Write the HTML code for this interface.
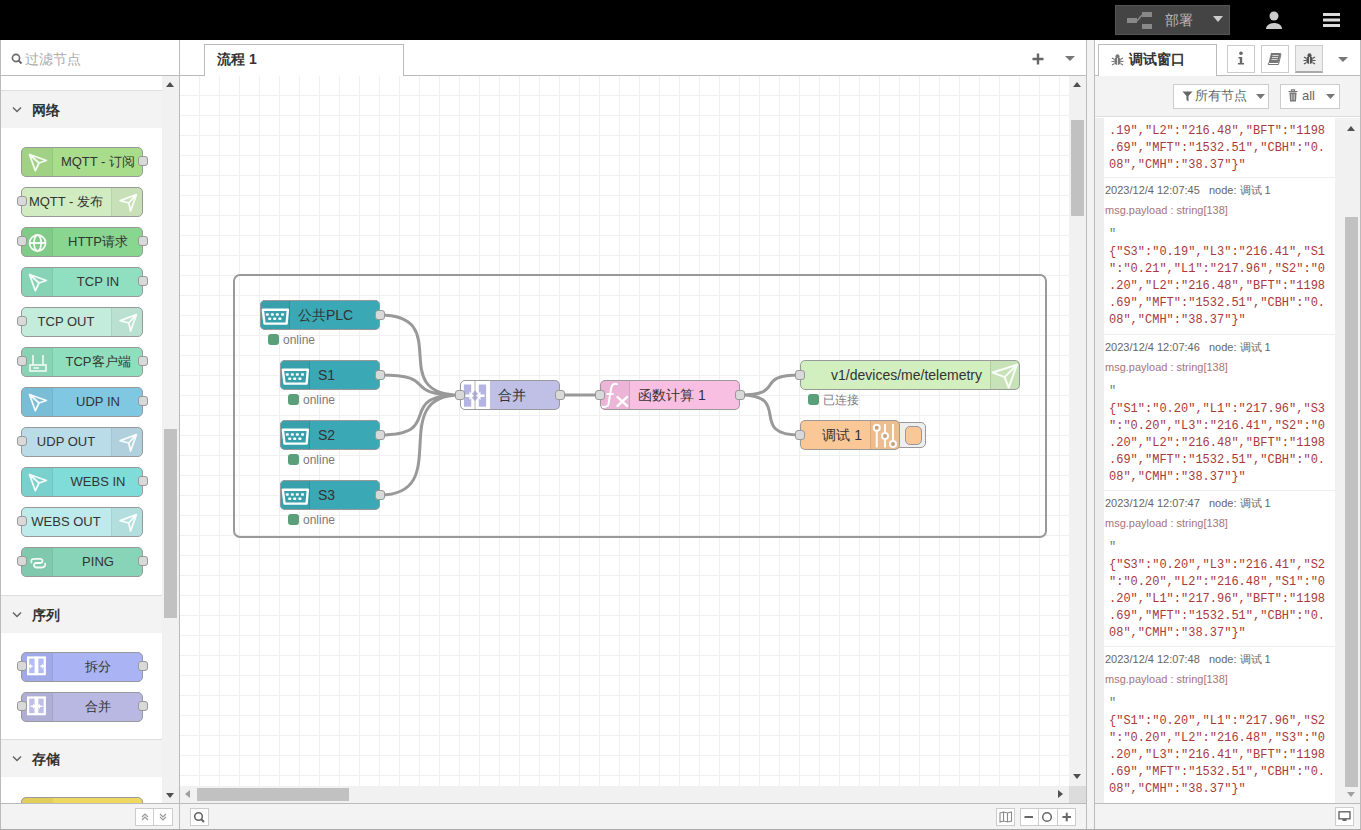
<!DOCTYPE html><html><head><meta charset="utf-8"><style>

*{margin:0;padding:0;box-sizing:border-box}
html,body{width:1361px;height:830px;overflow:hidden;background:#fff;font-family:"Liberation Sans", sans-serif;color:#333}
div{position:absolute}
.pn{width:122px;height:30px;border:1px solid #999;border-radius:5px;overflow:hidden}
.pl{top:4px;height:20px;line-height:20px;font-size:13px;text-align:center;white-space:nowrap;color:#333}
.pp{width:10px;height:10px;border:1px solid #999;border-radius:3px;background:#d9d9d9}
.cat{left:1px;width:161px;height:38px;background:#f3f3f3;border-top:1px solid #ddd}
.cat span{position:absolute;left:31px;top:0;line-height:38px;font-size:14px;font-weight:bold;color:#333}
.chev{position:absolute;left:11px;top:15px;}
.btn{border:1px solid #ccc;background:#fff;border-radius:0}
.dd{font-size:11px;color:#666;white-space:nowrap}
.mn{font-size:11px;color:#a87474;white-space:nowrap}
.js{font-family:"Liberation Mono", monospace;font-size:12px;color:#a83a3a;white-space:pre;line-height:17px}

</style></head><body>
<div style="left:0;top:0;width:1361px;height:40px;background:#000"></div>
<div style="left:1115px;top:5px;width:115px;height:30px;background:#444;border:1px solid #555"></div>
<svg style="position:absolute;left:1125px;top:10px" width="30" height="22"><g fill="#888"><rect x="2" y="8" width="10" height="5"/><rect x="17" y="2" width="10" height="5"/><rect x="17" y="14" width="10" height="5"/><path d="M12 11 L17 5" stroke="#888" stroke-width="1.5"/></g></svg>
<div style="left:1165px;top:10px;font-size:14px;color:#bbb;line-height:20px">部署</div>
<svg style="position:absolute;left:1213px;top:16px" width="10" height="6"><path d="M0 0 L10 0 L5 6 Z" fill="#ccc"/></svg>
<svg style="position:absolute;left:1264px;top:10px" width="20" height="20"><circle cx="10" cy="6" r="4.5" fill="#ccc"/><path d="M2 19 C2 11 18 11 18 19 Z" fill="#ccc"/></svg>
<svg style="position:absolute;left:1322px;top:12px" width="20" height="16"><g fill="#ddd"><rect x="1" y="1" width="17" height="3"/><rect x="1" y="6.5" width="17" height="3"/><rect x="1" y="12" width="17" height="3"/></g></svg>
<div style="left:0;top:40px;width:1px;height:790px;background:#bbb"></div>
<div style="left:179px;top:40px;width:1px;height:790px;background:#bbb"></div>
<div style="left:1px;top:75px;width:178px;height:1px;background:#bbb"></div>
<svg style="position:absolute;left:11px;top:53px" width="12" height="12"><circle cx="5" cy="5" r="3.6" fill="none" stroke="#666" stroke-width="1.6"/><line x1="7.6" y1="7.6" x2="10.5" y2="10.5" stroke="#666" stroke-width="2"/></svg>
<div style="left:25px;top:49px;font-size:14px;color:#aaa;line-height:20px">过滤节点</div>
<div style="left:162px;top:76px;width:17px;height:727px;background:#f1f1f1"></div>
<div style="left:164px;top:429px;width:13px;height:189px;background:#c1c1c1"></div>
<svg style="position:absolute;left:166px;top:82px" width="9" height="6"><path d="M0 5 L8 5 L4 0 Z" fill="#505050"/></svg>
<svg style="position:absolute;left:166px;top:793px" width="9" height="6"><path d="M0 0 L8 0 L4 5 Z" fill="#505050"/></svg>
<div class="cat" style="top:90px"><svg class="chev" width="10" height="8"><path d="M1 1.5 L5 5.5 L9 1.5" fill="none" stroke="#666" stroke-width="1.5"/></svg><span>网络</span></div>
<div class="cat" style="top:595px"><svg class="chev" width="10" height="8"><path d="M1 1.5 L5 5.5 L9 1.5" fill="none" stroke="#666" stroke-width="1.5"/></svg><span>序列</span></div>
<div class="cat" style="top:739px"><svg class="chev" width="10" height="8"><path d="M1 1.5 L5 5.5 L9 1.5" fill="none" stroke="#666" stroke-width="1.5"/></svg><span>存储</span></div>
<div class="pn" style="left:21px;top:147px;background:#a9dd8c"><div style="position:absolute;top:0;left:0;width:31px;height:28px;background:rgba(0,0,0,0.05);border-right:1px solid rgba(0,0,0,0.05)"></div><svg width="30" height="28" style="position:absolute;top:0;left:0"><path d="M7.5 6.5 L24.4 12.5 L17 15 L13.3 22.7 Z M7.5 6.5 L17 15" fill="none" stroke="#fff" stroke-opacity="0.9" stroke-width="1.8" stroke-linejoin="round"/></svg><div class="pl" style="left:32px;right:0">MQTT - 订阅</div></div><div class="pp" style="left:138px;top:156px"></div>
<div class="pn" style="left:21px;top:187px;background:#d2ecc2"><div style="position:absolute;top:0;right:0;width:31px;height:28px;background:rgba(0,0,0,0.05);border-left:1px solid rgba(0,0,0,0.05)"></div><svg width="30" height="28" style="position:absolute;top:0;right:0"><path d="M24.4 6.7 L8.2 12.6 L16.7 15 L18.6 23 Z M24.4 6.7 L16.7 15" fill="none" stroke="#fff" stroke-opacity="0.9" stroke-width="1.8" stroke-linejoin="round"/></svg><div class="pl" style="left:0;right:32px">MQTT - 发布</div></div><div class="pp" style="left:17px;top:196px"></div>
<div class="pn" style="left:21px;top:227px;background:#88d690"><div style="position:absolute;top:0;left:0;width:31px;height:28px;background:rgba(0,0,0,0.05);border-right:1px solid rgba(0,0,0,0.05)"></div><svg width="30" height="28" style="position:absolute;top:0;left:0"><g fill="none" stroke="#fff" stroke-opacity="0.9" stroke-width="1.8"><circle cx="15.6" cy="15" r="8"/><ellipse cx="15.6" cy="15" rx="3.6" ry="8"/><line x1="7.6" y1="15" x2="23.6" y2="15"/></g></svg><div class="pl" style="left:32px;right:0">HTTP请求</div></div><div class="pp" style="left:17px;top:236px"></div><div class="pp" style="left:138px;top:236px"></div>
<div class="pn" style="left:21px;top:267px;background:#8fdfc0"><div style="position:absolute;top:0;left:0;width:31px;height:28px;background:rgba(0,0,0,0.05);border-right:1px solid rgba(0,0,0,0.05)"></div><svg width="30" height="28" style="position:absolute;top:0;left:0"><path d="M7.5 6.5 L24.4 12.5 L17 15 L13.3 22.7 Z M7.5 6.5 L17 15" fill="none" stroke="#fff" stroke-opacity="0.9" stroke-width="1.8" stroke-linejoin="round"/></svg><div class="pl" style="left:32px;right:0">TCP IN</div></div><div class="pp" style="left:138px;top:276px"></div>
<div class="pn" style="left:21px;top:307px;background:#c3ecdc"><div style="position:absolute;top:0;right:0;width:31px;height:28px;background:rgba(0,0,0,0.05);border-left:1px solid rgba(0,0,0,0.05)"></div><svg width="30" height="28" style="position:absolute;top:0;right:0"><path d="M24.4 6.7 L8.2 12.6 L16.7 15 L18.6 23 Z M24.4 6.7 L16.7 15" fill="none" stroke="#fff" stroke-opacity="0.9" stroke-width="1.8" stroke-linejoin="round"/></svg><div class="pl" style="left:0;right:32px">TCP OUT</div></div><div class="pp" style="left:17px;top:316px"></div>
<div class="pn" style="left:21px;top:347px;background:#8fdfbe"><div style="position:absolute;top:0;left:0;width:31px;height:28px;background:rgba(0,0,0,0.05);border-right:1px solid rgba(0,0,0,0.05)"></div><svg width="30" height="28" style="position:absolute;top:0;left:0"><g fill="none" stroke="#fff" stroke-opacity="0.9" stroke-width="1.6"><line x1="11" y1="7" x2="11" y2="16.5"/><line x1="21" y1="7" x2="21" y2="16.5"/><rect x="8" y="17" width="16" height="6"/><line x1="11.5" y1="20" x2="17" y2="20" stroke-width="1.4"/></g></svg><div class="pl" style="left:32px;right:0">TCP客户端</div></div><div class="pp" style="left:17px;top:356px"></div><div class="pp" style="left:138px;top:356px"></div>
<div class="pn" style="left:21px;top:387px;background:#80c8e2"><div style="position:absolute;top:0;left:0;width:31px;height:28px;background:rgba(0,0,0,0.05);border-right:1px solid rgba(0,0,0,0.05)"></div><svg width="30" height="28" style="position:absolute;top:0;left:0"><path d="M7.5 6.5 L24.4 12.5 L17 15 L13.3 22.7 Z M7.5 6.5 L17 15" fill="none" stroke="#fff" stroke-opacity="0.9" stroke-width="1.8" stroke-linejoin="round"/></svg><div class="pl" style="left:32px;right:0">UDP IN</div></div><div class="pp" style="left:138px;top:396px"></div>
<div class="pn" style="left:21px;top:427px;background:#b9dce8"><div style="position:absolute;top:0;right:0;width:31px;height:28px;background:rgba(0,0,0,0.05);border-left:1px solid rgba(0,0,0,0.05)"></div><svg width="30" height="28" style="position:absolute;top:0;right:0"><path d="M24.4 6.7 L8.2 12.6 L16.7 15 L18.6 23 Z M24.4 6.7 L16.7 15" fill="none" stroke="#fff" stroke-opacity="0.9" stroke-width="1.8" stroke-linejoin="round"/></svg><div class="pl" style="left:0;right:32px">UDP OUT</div></div><div class="pp" style="left:17px;top:436px"></div>
<div class="pn" style="left:21px;top:467px;background:#80dcd8"><div style="position:absolute;top:0;left:0;width:31px;height:28px;background:rgba(0,0,0,0.05);border-right:1px solid rgba(0,0,0,0.05)"></div><svg width="30" height="28" style="position:absolute;top:0;left:0"><path d="M7.5 6.5 L24.4 12.5 L17 15 L13.3 22.7 Z M7.5 6.5 L17 15" fill="none" stroke="#fff" stroke-opacity="0.9" stroke-width="1.8" stroke-linejoin="round"/></svg><div class="pl" style="left:32px;right:0">WEBS IN</div></div><div class="pp" style="left:138px;top:476px"></div>
<div class="pn" style="left:21px;top:507px;background:#bdeaea"><div style="position:absolute;top:0;right:0;width:31px;height:28px;background:rgba(0,0,0,0.05);border-left:1px solid rgba(0,0,0,0.05)"></div><svg width="30" height="28" style="position:absolute;top:0;right:0"><path d="M24.4 6.7 L8.2 12.6 L16.7 15 L18.6 23 Z M24.4 6.7 L16.7 15" fill="none" stroke="#fff" stroke-opacity="0.9" stroke-width="1.8" stroke-linejoin="round"/></svg><div class="pl" style="left:0;right:32px">WEBS OUT</div></div><div class="pp" style="left:17px;top:516px"></div>
<div class="pn" style="left:21px;top:547px;background:#88d4b8"><div style="position:absolute;top:0;left:0;width:31px;height:28px;background:rgba(0,0,0,0.05);border-right:1px solid rgba(0,0,0,0.05)"></div><svg width="30" height="28" style="position:absolute;top:0;left:0"><g fill="none" stroke="#fff" stroke-opacity="0.9" stroke-width="1.8" stroke-linecap="round"><path d="M9.5 14.5 C8.5 12 10 10.8 13 10.8 L18 10.8 C21 10.8 21.5 14.5 18.5 14.8 L14 15"/><path d="M23 15.5 C24 18 22.5 19.5 19.5 19.5 L14.5 19.5 C11.5 19.5 11 15.5 14 15.2 L18.5 15"/></g></svg><div class="pl" style="left:32px;right:0">PING</div></div><div class="pp" style="left:17px;top:556px"></div><div class="pp" style="left:138px;top:556px"></div>
<div class="pn" style="left:21px;top:652px;background:#aab4f5"><div style="position:absolute;top:0;left:0;width:31px;height:28px;background:rgba(0,0,0,0.05);border-right:1px solid rgba(0,0,0,0.05)"></div><svg width="30" height="28" style="position:absolute;top:0;left:0"><g transform="translate(5,3.4) scale(0.63)"><rect x="0" y="0" width="30" height="30" fill="#fff"/><g fill="#aab4f5" fill-opacity="0.9"><rect x="3.5" y="3.5" width="8.5" height="23"/><rect x="18" y="3.5" width="8.5" height="23"/></g><path d="M15 0 V30" stroke="#fff" stroke-width="2"/><path d="M3 15.7 H9 M27 15.7 H21" stroke="#fff" stroke-width="2.5"/><path d="M6.5 11.5 L2.2 15.7 L6.5 19.9 Z M23.5 11.5 L27.8 15.7 L23.5 19.9 Z" fill="#fff"/></g></svg><div class="pl" style="left:32px;right:0">拆分</div></div><div class="pp" style="left:17px;top:661px"></div><div class="pp" style="left:138px;top:661px"></div>
<div class="pn" style="left:21px;top:692px;background:#b8b8e2"><div style="position:absolute;top:0;left:0;width:31px;height:28px;background:rgba(0,0,0,0.05);border-right:1px solid rgba(0,0,0,0.05)"></div><svg width="30" height="28" style="position:absolute;top:0;left:0"><g transform="translate(5,3.4) scale(0.63)"><rect x="0" y="0" width="30" height="30" fill="#fff"/><g fill="#b8b8e2" fill-opacity="0.9"><rect x="3.5" y="3.5" width="8.5" height="23"/><rect x="18" y="3.5" width="8.5" height="23"/></g><path d="M15 0 V30" stroke="#fff" stroke-width="2"/><path d="M5.5 15.7 H10.5 M24.5 15.7 H19.5" stroke="#fff" stroke-width="2.5"/><path d="M9.5 11.5 L13.8 15.7 L9.5 19.9 Z M20.5 11.5 L16.2 15.7 L20.5 19.9 Z" fill="#fff"/></g></svg><div class="pl" style="left:32px;right:0">合并</div></div><div class="pp" style="left:17px;top:701px"></div><div class="pp" style="left:138px;top:701px"></div>
<div style="left:21px;top:797px;width:122px;height:6px;overflow:hidden"><div style="left:0;top:0;width:122px;height:30px;background:#eed85f;border:1px solid #999;border-radius:5px"><div style="left:0;top:0;width:31px;height:28px;background:rgba(0,0,0,0.05)"></div></div></div>
<div style="left:1px;top:803px;width:178px;height:26px;background:#f3f3f3;border-top:1px solid #bbb"></div>
<div class="btn" style="left:135px;top:808px;width:38px;height:18px"></div>
<div style="left:153px;top:808px;width:1px;height:18px;background:#ccc"></div>
<svg style="position:absolute;left:140px;top:812px" width="30" height="10"><path d="M2 5 L5 2 L8 5 M2 8 L5 5 L8 8" fill="none" stroke="#999" stroke-width="1.2"/><path d="M20 2 L23 5 L26 2 M20 5 L23 8 L26 5" fill="none" stroke="#999" stroke-width="1.2"/></svg>
<div style="left:180px;top:40px;width:906px;height:35px;background:#fff"></div>
<div style="left:180px;top:75px;width:906px;height:1px;background:#bbb"></div>
<div style="left:1086px;top:40px;width:1px;height:790px;background:#bbb"></div>
<div style="left:204px;top:44px;width:200px;height:32px;background:#fff;border:1px solid #bbb;border-bottom:none"></div>
<div style="left:217px;top:49px;font-size:14px;font-weight:bold;color:#333;line-height:20px">流程 1</div>
<svg style="position:absolute;left:1032px;top:53px" width="12" height="12"><path d="M6 0.5 V11.5 M0.5 6 H11.5" stroke="#666" stroke-width="2.4"/></svg>
<svg style="position:absolute;left:1065px;top:56px" width="10" height="6"><path d="M0 0 L10 0 L5 5 Z" fill="#777"/></svg>
<svg style="position:absolute;left:180px;top:76px" width="889" height="710"><g transform="translate(-180,-76)"><path d="M199.5 76 V786 M219.5 76 V786 M239.5 76 V786 M259.5 76 V786 M279.5 76 V786 M299.5 76 V786 M319.5 76 V786 M339.5 76 V786 M359.5 76 V786 M379.5 76 V786 M399.5 76 V786 M419.5 76 V786 M439.5 76 V786 M459.5 76 V786 M479.5 76 V786 M499.5 76 V786 M519.5 76 V786 M539.5 76 V786 M559.5 76 V786 M579.5 76 V786 M599.5 76 V786 M619.5 76 V786 M639.5 76 V786 M659.5 76 V786 M679.5 76 V786 M699.5 76 V786 M719.5 76 V786 M739.5 76 V786 M759.5 76 V786 M779.5 76 V786 M799.5 76 V786 M819.5 76 V786 M839.5 76 V786 M859.5 76 V786 M879.5 76 V786 M899.5 76 V786 M919.5 76 V786 M939.5 76 V786 M959.5 76 V786 M979.5 76 V786 M999.5 76 V786 M1019.5 76 V786 M1039.5 76 V786 M1059.5 76 V786 M180 95.5 H1069 M180 115.5 H1069 M180 135.5 H1069 M180 155.5 H1069 M180 175.5 H1069 M180 195.5 H1069 M180 215.5 H1069 M180 235.5 H1069 M180 255.5 H1069 M180 275.5 H1069 M180 295.5 H1069 M180 315.5 H1069 M180 335.5 H1069 M180 355.5 H1069 M180 375.5 H1069 M180 395.5 H1069 M180 415.5 H1069 M180 435.5 H1069 M180 455.5 H1069 M180 475.5 H1069 M180 495.5 H1069 M180 515.5 H1069 M180 535.5 H1069 M180 555.5 H1069 M180 575.5 H1069 M180 595.5 H1069 M180 615.5 H1069 M180 635.5 H1069 M180 655.5 H1069 M180 675.5 H1069 M180 695.5 H1069 M180 715.5 H1069 M180 735.5 H1069 M180 755.5 H1069 M180 775.5 H1069" stroke="#f0f0f0" stroke-width="1" fill="none"/><rect x="234" y="275" width="812" height="262" rx="6" ry="6" fill="none" stroke="#999" stroke-width="2"/><path d="M380 315 C455.00 315 385.00 395 460 395 M380 375 C441.85 375 398.15 395 460 395 M380 435 C447.08 435 392.92 395 460 395 M380 495 C455.00 495 385.00 395 460 395 M560 395 C590.00 395 570.00 395 600 395 M740 395 C787.43 395 752.57 375 800 375 M740 395 C794.08 395 745.92 435 800 435" fill="none" stroke="#999" stroke-width="3"/></g></svg>
<div style="left:260px;top:300px;width:120px;height:30px;background:#3aa9b5;border-radius:5px;overflow:hidden"><div style="left:0px;top:0;width:30px;height:30px;background:rgba(0,0,0,0.05);border-right:1px solid rgba(0,0,0,0.1)"></div><svg style="position:absolute;left:0px;top:0" width="30" height="30"><path d="M2.8 9.7 H27.9 L26.6 23.6 H4.5 Z" fill="none" stroke="#fff" stroke-width="2.4" stroke-linejoin="round"/><g fill="#fff"><rect x="5.8" y="13.2" width="3" height="2.6" rx="0.8"/><rect x="10.8" y="13.2" width="3" height="2.6" rx="0.8"/><rect x="15.8" y="13.2" width="3" height="2.6" rx="0.8"/><rect x="21" y="13.2" width="3" height="2.6" rx="0.8"/><rect x="8.2" y="17.5" width="3" height="2.6" rx="0.8"/><rect x="13.2" y="17.5" width="3" height="2.6" rx="0.8"/><rect x="18.4" y="17.5" width="3" height="2.6" rx="0.8"/></g></svg><div style="left:38px;top:0;line-height:30px;font-size:14px;color:#333;white-space:nowrap">公共PLC</div><div style="left:0;top:0;width:120px;height:30px;border:1px solid #999;border-radius:5px"></div></div>
<div class="pp" style="left:375px;top:310px"></div>
<div style="left:268px;top:334px;width:11px;height:11px;background:#5a9e7a;border-radius:3px"></div>
<div style="left:283px;top:332px;font-size:12px;line-height:16px;color:#7a7a7a;white-space:nowrap">online</div>
<div style="left:280px;top:360px;width:100px;height:30px;background:#3aa9b5;border-radius:5px;overflow:hidden"><div style="left:0px;top:0;width:30px;height:30px;background:rgba(0,0,0,0.05);border-right:1px solid rgba(0,0,0,0.1)"></div><svg style="position:absolute;left:0px;top:0" width="30" height="30"><path d="M2.8 9.7 H27.9 L26.6 23.6 H4.5 Z" fill="none" stroke="#fff" stroke-width="2.4" stroke-linejoin="round"/><g fill="#fff"><rect x="5.8" y="13.2" width="3" height="2.6" rx="0.8"/><rect x="10.8" y="13.2" width="3" height="2.6" rx="0.8"/><rect x="15.8" y="13.2" width="3" height="2.6" rx="0.8"/><rect x="21" y="13.2" width="3" height="2.6" rx="0.8"/><rect x="8.2" y="17.5" width="3" height="2.6" rx="0.8"/><rect x="13.2" y="17.5" width="3" height="2.6" rx="0.8"/><rect x="18.4" y="17.5" width="3" height="2.6" rx="0.8"/></g></svg><div style="left:38px;top:0;line-height:30px;font-size:14px;color:#333;white-space:nowrap">S1</div><div style="left:0;top:0;width:100px;height:30px;border:1px solid #999;border-radius:5px"></div></div>
<div class="pp" style="left:375px;top:370px"></div>
<div style="left:288px;top:394px;width:11px;height:11px;background:#5a9e7a;border-radius:3px"></div>
<div style="left:303px;top:392px;font-size:12px;line-height:16px;color:#7a7a7a;white-space:nowrap">online</div>
<div style="left:280px;top:420px;width:100px;height:30px;background:#3aa9b5;border-radius:5px;overflow:hidden"><div style="left:0px;top:0;width:30px;height:30px;background:rgba(0,0,0,0.05);border-right:1px solid rgba(0,0,0,0.1)"></div><svg style="position:absolute;left:0px;top:0" width="30" height="30"><path d="M2.8 9.7 H27.9 L26.6 23.6 H4.5 Z" fill="none" stroke="#fff" stroke-width="2.4" stroke-linejoin="round"/><g fill="#fff"><rect x="5.8" y="13.2" width="3" height="2.6" rx="0.8"/><rect x="10.8" y="13.2" width="3" height="2.6" rx="0.8"/><rect x="15.8" y="13.2" width="3" height="2.6" rx="0.8"/><rect x="21" y="13.2" width="3" height="2.6" rx="0.8"/><rect x="8.2" y="17.5" width="3" height="2.6" rx="0.8"/><rect x="13.2" y="17.5" width="3" height="2.6" rx="0.8"/><rect x="18.4" y="17.5" width="3" height="2.6" rx="0.8"/></g></svg><div style="left:38px;top:0;line-height:30px;font-size:14px;color:#333;white-space:nowrap">S2</div><div style="left:0;top:0;width:100px;height:30px;border:1px solid #999;border-radius:5px"></div></div>
<div class="pp" style="left:375px;top:430px"></div>
<div style="left:288px;top:454px;width:11px;height:11px;background:#5a9e7a;border-radius:3px"></div>
<div style="left:303px;top:452px;font-size:12px;line-height:16px;color:#7a7a7a;white-space:nowrap">online</div>
<div style="left:280px;top:480px;width:100px;height:30px;background:#3aa9b5;border-radius:5px;overflow:hidden"><div style="left:0px;top:0;width:30px;height:30px;background:rgba(0,0,0,0.05);border-right:1px solid rgba(0,0,0,0.1)"></div><svg style="position:absolute;left:0px;top:0" width="30" height="30"><path d="M2.8 9.7 H27.9 L26.6 23.6 H4.5 Z" fill="none" stroke="#fff" stroke-width="2.4" stroke-linejoin="round"/><g fill="#fff"><rect x="5.8" y="13.2" width="3" height="2.6" rx="0.8"/><rect x="10.8" y="13.2" width="3" height="2.6" rx="0.8"/><rect x="15.8" y="13.2" width="3" height="2.6" rx="0.8"/><rect x="21" y="13.2" width="3" height="2.6" rx="0.8"/><rect x="8.2" y="17.5" width="3" height="2.6" rx="0.8"/><rect x="13.2" y="17.5" width="3" height="2.6" rx="0.8"/><rect x="18.4" y="17.5" width="3" height="2.6" rx="0.8"/></g></svg><div style="left:38px;top:0;line-height:30px;font-size:14px;color:#333;white-space:nowrap">S3</div><div style="left:0;top:0;width:100px;height:30px;border:1px solid #999;border-radius:5px"></div></div>
<div class="pp" style="left:375px;top:490px"></div>
<div style="left:288px;top:514px;width:11px;height:11px;background:#5a9e7a;border-radius:3px"></div>
<div style="left:303px;top:512px;font-size:12px;line-height:16px;color:#7a7a7a;white-space:nowrap">online</div>
<div style="left:460px;top:380px;width:100px;height:30px;background:#c0c0e6;border-radius:5px;overflow:hidden"><div style="left:0px;top:0;width:30px;height:30px;background:rgba(0,0,0,0.05);border-right:1px solid rgba(0,0,0,0.1)"></div><svg style="position:absolute;left:0px;top:0" width="30" height="30"><rect x="1" y="1" width="29" height="28" fill="#fff"/><g fill="#b4b4e2"><rect x="3.9" y="4.5" width="7.3" height="22.2"/><rect x="18.8" y="4.5" width="7.3" height="22.2"/><path d="M15 10.5 L20 15.7 L15 21 L10 15.7 Z"/></g><path d="M15 1 V29" stroke="#999" stroke-width="1.2" stroke-opacity="0.6"/><path d="M5.5 15.7 H10.5 M24.5 15.7 H19.5" stroke="#fff" stroke-width="2.5"/><path d="M9.5 11.5 L13.8 15.7 L9.5 19.9 Z M20.5 11.5 L16.2 15.7 L20.5 19.9 Z" fill="#fff"/></svg><div style="left:38px;top:0;line-height:30px;font-size:14px;color:#333;white-space:nowrap">合并</div><div style="left:0;top:0;width:100px;height:30px;border:1px solid #999;border-radius:5px"></div></div>
<div class="pp" style="left:455px;top:390px"></div>
<div class="pp" style="left:555px;top:390px"></div>
<div style="left:600px;top:380px;width:140px;height:30px;background:#f9bfe3;border-radius:5px;overflow:hidden"><div style="left:0px;top:0;width:30px;height:30px;background:rgba(0,0,0,0.05);border-right:1px solid rgba(0,0,0,0.1)"></div><svg style="position:absolute;left:0px;top:0" width="30" height="30"><path d="M16.8 4.1 C14 3.2 11.8 4.5 11.2 8 L8.4 24.5 C8 26.5 5 27.5 1.7 26.7" fill="none" stroke="#fff" stroke-width="2" stroke-linecap="round"/><path d="M6.2 14 H13.6" stroke="#fff" stroke-width="1.8"/><path d="M16.8 16.4 L27.9 26.7 M27.8 16.4 L16.8 26.7" stroke="#fff" stroke-width="2.4"/></svg><div style="left:38px;top:0;line-height:30px;font-size:14px;color:#333;white-space:nowrap">函数计算 1</div><div style="left:0;top:0;width:140px;height:30px;border:1px solid #999;border-radius:5px"></div></div>
<div class="pp" style="left:595px;top:390px"></div>
<div class="pp" style="left:735px;top:390px"></div>
<div style="left:800px;top:360px;width:220px;height:30px;background:#d2efc0;border-radius:5px;overflow:hidden"><div style="left:190px;top:0;width:30px;height:30px;background:rgba(0,0,0,0.05);border-left:1px solid rgba(0,0,0,0.1)"></div><svg style="position:absolute;left:190px;top:0" width="30" height="30"><path d="M27 4.7 L2.5 12.5 L14.6 17.1 L18.7 27.6 Z M27 4.7 L14.6 17.1" fill="none" stroke="#fff" stroke-opacity="0.9" stroke-width="2" stroke-linejoin="round"/></svg><div style="right:38px;top:0;line-height:30px;font-size:14px;color:#333;white-space:nowrap">v1/devices/me/telemetry</div><div style="left:0;top:0;width:220px;height:30px;border:1px solid #999;border-radius:5px"></div></div>
<div class="pp" style="left:795px;top:370px"></div>
<div style="left:808px;top:394px;width:11px;height:11px;background:#5a9e7a;border-radius:3px"></div>
<div style="left:823px;top:392px;font-size:12px;line-height:16px;color:#7a7a7a;white-space:nowrap">已连接</div>
<div style="left:894px;top:422px;width:32px;height:26px;background:#eee;border:1px solid #999;border-radius:5px"><div style="left:10px;top:3px;width:17px;height:19px;background:#f9c896;border:1px solid #999;border-radius:5px"></div></div>
<div style="left:800px;top:420px;width:100px;height:30px;background:#f9c896;border-radius:5px;overflow:hidden"><div style="left:70px;top:0;width:30px;height:30px;background:rgba(0,0,0,0.05);border-left:1px solid rgba(0,0,0,0.1)"></div><svg style="position:absolute;left:70px;top:0" width="30" height="30"><g fill="none" stroke="#fff" stroke-width="2" stroke-opacity="0.95"><line x1="6.75" y1="11" x2="6.75" y2="27.5"/><line x1="15" y1="4" x2="15" y2="13"/><line x1="15" y1="19" x2="15" y2="27.5"/><line x1="23" y1="4" x2="23" y2="21"/><circle cx="6.75" cy="7.75" r="3" fill="#a89070" fill-opacity="0.6"/><circle cx="15" cy="16" r="3" fill="#a89070" fill-opacity="0.6"/><circle cx="23" cy="24" r="3" fill="#a89070" fill-opacity="0.6"/></g></svg><div style="right:38px;top:0;line-height:30px;font-size:14px;color:#333;white-space:nowrap">调试 1</div><div style="left:0;top:0;width:100px;height:30px;border:1px solid #999;border-radius:5px"></div></div>
<div class="pp" style="left:795px;top:430px"></div>
<div style="left:1069px;top:76px;width:17px;height:710px;background:#f1f1f1"></div>
<div style="left:1071px;top:120px;width:13px;height:96px;background:#c1c1c1"></div>
<svg style="position:absolute;left:1073px;top:82px" width="9" height="6"><path d="M0 5 L8 5 L4 0 Z" fill="#505050"/></svg>
<svg style="position:absolute;left:1073px;top:774px" width="9" height="6"><path d="M0 0 L8 0 L4 5 Z" fill="#505050"/></svg>
<div style="left:180px;top:786px;width:889px;height:17px;background:#f1f1f1"></div>
<div style="left:1069px;top:786px;width:17px;height:17px;background:#dcdcdc"></div>
<div style="left:197px;top:788px;width:152px;height:13px;background:#c1c1c1"></div>
<svg style="position:absolute;left:185px;top:790px" width="6" height="9"><path d="M5 0 L5 8 L0 4 Z" fill="#a0a0a0"/></svg>
<svg style="position:absolute;left:1058px;top:790px" width="6" height="9"><path d="M0 0 L0 8 L5 4 Z" fill="#505050"/></svg>
<div style="left:180px;top:803px;width:906px;height:26px;background:#f3f3f3;border-top:1px solid #bbb"></div>
<div class="btn" style="left:190px;top:808px;width:19px;height:18px"></div>
<svg style="position:absolute;left:193px;top:811px" width="13" height="13"><circle cx="5.5" cy="5.5" r="3.8" fill="none" stroke="#666" stroke-width="1.6"/><line x1="8.2" y1="8.2" x2="11" y2="11" stroke="#666" stroke-width="2"/></svg>
<div class="btn" style="left:996px;top:808px;width:19px;height:18px"></div>
<svg style="position:absolute;left:999px;top:811px" width="14" height="12"><path d="M1 2 L4.5 1 L8.5 2 L12.5 1 V10 L8.5 11 L4.5 10 L1 11 Z M4.5 1 V10 M8.5 2 V11" fill="none" stroke="#888" stroke-width="1.1"/></svg>
<div class="btn" style="left:1020px;top:808px;width:56px;height:18px"></div>
<div style="left:1038px;top:808px;width:1px;height:18px;background:#ccc"></div>
<div style="left:1057px;top:808px;width:1px;height:18px;background:#ccc"></div>
<svg style="position:absolute;left:1020px;top:808px" width="56" height="18"><path d="M4.5 9 H13" stroke="#666" stroke-width="2"/><circle cx="27" cy="9" r="4.3" fill="none" stroke="#666" stroke-width="1.5"/><path d="M42.5 9 H51 M46.75 4.75 V13.25" stroke="#666" stroke-width="2"/></svg>
<div style="left:1087px;top:40px;width:8px;height:790px;background:#f3f3f3"></div>
<div style="left:1094px;top:40px;width:1px;height:790px;background:#bbb"></div>
<div style="left:1360px;top:40px;width:1px;height:790px;background:#bbb"></div>
<div style="left:1095px;top:75px;width:265px;height:1px;background:#bbb"></div>
<div style="left:1098px;top:44px;width:119px;height:32px;background:#fff;border:1px solid #bbb;border-bottom:none"></div>
<svg style="position:absolute;left:1111px;top:53px" width="13" height="13"><g fill="#777"><ellipse cx="6.5" cy="8" rx="3.2" ry="4"/><circle cx="6.5" cy="3.2" r="2"/></g><g stroke="#777" stroke-width="1.2"><path d="M1 5 L3.5 6.5 M12 5 L9.5 6.5 M0.5 8.5 H3.5 M12.5 8.5 H9.5 M1 12 L3.5 10.5 M12 12 L9.5 10.5"/></g><path d="M6.5 5 V12" stroke="#fff" stroke-width="0.8"/></svg>
<div style="left:1129px;top:49px;font-size:14px;font-weight:bold;color:#333;line-height:20px">调试窗口</div>
<div class="btn" style="left:1227px;top:45px;width:28px;height:28px"></div>
<svg style="position:absolute;left:1236px;top:51px" width="10" height="14"><circle cx="5" cy="2.2" r="1.8" fill="#666"/><path d="M2.5 6 H6.2 V12 H8 V13.5 H2 V12 H3.8 V7.4 H2.5 Z" fill="#666"/></svg>
<div class="btn" style="left:1261px;top:45px;width:28px;height:28px"></div>
<svg style="position:absolute;left:1267px;top:52px" width="16" height="14"><path d="M4 1 H14 L11.5 11 H1.5 Z" fill="#777"/><path d="M1.5 11 L1.2 12.5 H11.5 L14 2" fill="none" stroke="#777" stroke-width="1"/><path d="M5.5 3.5 H11.5 M5 5.5 H11 M4.5 7.5 H10.5" stroke="#fff" stroke-width="0.7"/></svg>
<div style="left:1295px;top:45px;width:28px;height:28px;background:#eee;border:1px solid #ccc;border-bottom:2px solid #aaa"></div>
<svg style="position:absolute;left:1303px;top:52px" width="13" height="13"><g fill="#555"><ellipse cx="6.5" cy="8" rx="3.2" ry="4"/><circle cx="6.5" cy="3.2" r="2"/></g><g stroke="#555" stroke-width="1.2"><path d="M1 5 L3.5 6.5 M12 5 L9.5 6.5 M0.5 8.5 H3.5 M12.5 8.5 H9.5 M1 12 L3.5 10.5 M12 12 L9.5 10.5"/></g><path d="M6.5 5 V12" stroke="#fff" stroke-width="0.8"/></svg>
<svg style="position:absolute;left:1338px;top:57px" width="10" height="6"><path d="M0 0 L10 0 L5 5 Z" fill="#777"/></svg>
<div style="left:1095px;top:76px;width:265px;height:41px;background:#f3f3f3;border-bottom:1px solid #ddd"></div>
<div class="btn" style="left:1173px;top:84px;width:96px;height:25px"></div>
<svg style="position:absolute;left:1182px;top:91px" width="11" height="11"><path d="M0.5 0.5 H10.5 L6.5 5 V10.5 L4.5 9 V5 Z" fill="#666"/></svg>
<div style="left:1195px;top:86px;font-size:13px;color:#666;line-height:20px">所有节点</div>
<svg style="position:absolute;left:1256px;top:94px" width="9" height="5"><path d="M0 0 L9 0 L4.5 5 Z" fill="#777"/></svg>
<div class="btn" style="left:1280px;top:84px;width:60px;height:25px"></div>
<svg style="position:absolute;left:1288px;top:89px" width="10" height="13"><path d="M0.5 2.5 H9.5 M3.5 2 V0.8 H6.5 V2" fill="none" stroke="#777" stroke-width="1.2"/><path d="M1.5 3.5 H8.5 L8 12.5 H2 Z" fill="#777"/><path d="M3.8 5 V11 M6.2 5 V11" stroke="#f3f3f3" stroke-width="0.8"/></svg>
<div style="left:1302px;top:86px;font-size:13px;color:#666;line-height:20px">all</div>
<svg style="position:absolute;left:1326px;top:94px" width="9" height="5"><path d="M0 0 L9 0 L4.5 5 Z" fill="#777"/></svg>
<div style="left:1095px;top:118px;width:265px;height:685px;background:#fff;overflow:hidden">
<div style="left:0;top:0;width:9px;height:685px;background:#eee"></div>
<div class="js" style="left:14px;top:5px">.19","L2":"216.48","BFT":"1198</div>
<div class="js" style="left:14px;top:22px">.69","MFT":"1532.51","CBH":"0.</div>
<div class="js" style="left:14px;top:39px">08","CMH":"38.37"}"</div>
<div style="left:9px;top:59px;width:231px;height:1px;background:#eee"></div>
<div class="dd" style="left:10px;top:65px;line-height:14px">2023/12/4 12:07:45&nbsp;&nbsp;&nbsp;node: 调试 1</div>
<div class="mn" style="left:10px;top:85px;line-height:14px">msg.payload : string[138]</div>
<div class="js" style="left:14px;top:108px;color:#777">"</div>
<div class="js" style="left:14px;top:126px">{"S3":"0.19","L3":"216.41","S1</div>
<div class="js" style="left:14px;top:143px">":"0.21","L1":"217.96","S2":"0</div>
<div class="js" style="left:14px;top:160px">.20","L2":"216.48","BFT":"1198</div>
<div class="js" style="left:14px;top:177px">.69","MFT":"1532.51","CBH":"0.</div>
<div class="js" style="left:14px;top:194px">08","CMH":"38.37"}"</div>
<div style="left:9px;top:216px;width:231px;height:1px;background:#eee"></div>
<div class="dd" style="left:10px;top:222px;line-height:14px">2023/12/4 12:07:46&nbsp;&nbsp;&nbsp;node: 调试 1</div>
<div class="mn" style="left:10px;top:242px;line-height:14px">msg.payload : string[138]</div>
<div class="js" style="left:14px;top:265px;color:#777">"</div>
<div class="js" style="left:14px;top:283px">{"S1":"0.20","L1":"217.96","S3</div>
<div class="js" style="left:14px;top:300px">":"0.20","L3":"216.41","S2":"0</div>
<div class="js" style="left:14px;top:317px">.20","L2":"216.48","BFT":"1198</div>
<div class="js" style="left:14px;top:334px">.69","MFT":"1532.51","CBH":"0.</div>
<div class="js" style="left:14px;top:351px">08","CMH":"38.37"}"</div>
<div style="left:9px;top:372px;width:231px;height:1px;background:#eee"></div>
<div class="dd" style="left:10px;top:378px;line-height:14px">2023/12/4 12:07:47&nbsp;&nbsp;&nbsp;node: 调试 1</div>
<div class="mn" style="left:10px;top:398px;line-height:14px">msg.payload : string[138]</div>
<div class="js" style="left:14px;top:421px;color:#777">"</div>
<div class="js" style="left:14px;top:439px">{"S3":"0.20","L3":"216.41","S2</div>
<div class="js" style="left:14px;top:456px">":"0.20","L2":"216.48","S1":"0</div>
<div class="js" style="left:14px;top:473px">.20","L1":"217.96","BFT":"1198</div>
<div class="js" style="left:14px;top:490px">.69","MFT":"1532.51","CBH":"0.</div>
<div class="js" style="left:14px;top:507px">08","CMH":"38.37"}"</div>
<div style="left:9px;top:528px;width:231px;height:1px;background:#eee"></div>
<div class="dd" style="left:10px;top:534px;line-height:14px">2023/12/4 12:07:48&nbsp;&nbsp;&nbsp;node: 调试 1</div>
<div class="mn" style="left:10px;top:554px;line-height:14px">msg.payload : string[138]</div>
<div class="js" style="left:14px;top:577px;color:#777">"</div>
<div class="js" style="left:14px;top:595px">{"S1":"0.20","L1":"217.96","S2</div>
<div class="js" style="left:14px;top:612px">":"0.20","L2":"216.48","S3":"0</div>
<div class="js" style="left:14px;top:629px">.20","L3":"216.41","BFT":"1198</div>
<div class="js" style="left:14px;top:646px">.69","MFT":"1532.51","CBH":"0.</div>
<div class="js" style="left:14px;top:663px">08","CMH":"38.37"}"</div>
</div>
<div style="left:1335px;top:118px;width:25px;height:685px;background:#f1f1f1"></div>
<div style="left:1345px;top:217px;width:13px;height:570px;background:#c1c1c1"></div>
<svg style="position:absolute;left:1347px;top:126px" width="9" height="6"><path d="M0 5 L8 5 L4 0 Z" fill="#505050"/></svg>
<svg style="position:absolute;left:1347px;top:792px" width="9" height="6"><path d="M0 0 L8 0 L4 5 Z" fill="#a0a0a0"/></svg>
<div style="left:1095px;top:803px;width:265px;height:26px;background:#f3f3f3;border-top:1px solid #bbb"></div>
<div class="btn" style="left:1335px;top:807px;width:19px;height:19px"></div>
<svg style="position:absolute;left:1338px;top:811px" width="13" height="11"><rect x="1" y="0.8" width="11" height="7" fill="none" stroke="#666" stroke-width="1.4"/><rect x="4.5" y="8" width="4" height="2" fill="#666"/></svg>
<div style="left:0;top:829px;width:1361px;height:1px;background:#aaa"></div>
</body></html>
